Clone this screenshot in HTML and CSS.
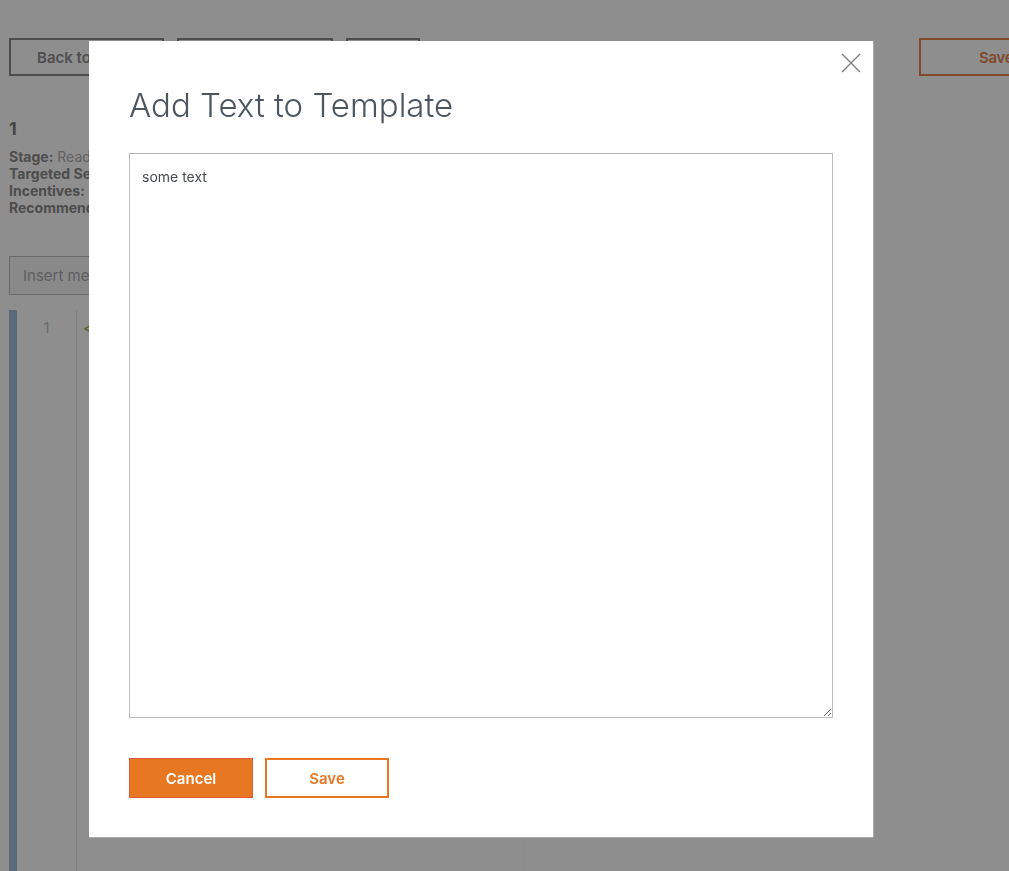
FILE: index.html
```html
<!DOCTYPE html>
<html lang="en">
<head>
<meta charset="utf-8">
<title>Add Text to Template</title>
<link rel="stylesheet" href="styles.css">
</head>
<body>
<div class="page">
  <div class="toolbar">
    <button class="btn-ghost btn-back">Back to Templates</button>
    <button class="btn-ghost btn-mid">Preview Email</button>
    <button class="btn-ghost btn-small">Test</button>
    <div class="spacer"></div>
    <button class="btn-ghost btn-save">Save</button>
  </div>
  <div class="info">
    <h2 class="info-title">1</h2>
    <div class="info-line"><b>Stage:</b> Ready to Send</div>
    <div class="info-line"><b>Targeted Segment:</b> All Customers</div>
    <div class="info-line"><b>Incentives:</b> None</div>
    <div class="info-line"><b>Recommended Send Time:</b> Morning</div>
  </div>
  <div class="insert-row">
    <input class="insert-input" type="text" placeholder="Insert merge field">
  </div>
  <div class="editor">
    <div class="editor-bar"></div>
    <div class="editor-gutter"><span class="line-no">1</span></div>
    <div class="editor-code"><span class="tag">&lt;</span></div>
  </div>
</div>

<div class="overlay">
  <div class="modal">
    <button class="modal-close" aria-label="Close">
      <svg width="20" height="20" viewBox="0 0 20 20"><path d="M1 1 L19 19 M19 1 L1 19" stroke="#7a7d82" stroke-width="1.3" fill="none"/></svg>
    </button>
    <h1 class="modal-title">Add Text to Template</h1>
    <textarea class="modal-text">some text</textarea>
    <div class="modal-actions">
      <button class="btn-cancel">Cancel</button>
      <button class="btn-save-modal">Save</button>
    </div>
  </div>
</div>
</body>
</html>
```
FILE: styles.css
```css
* { box-sizing: border-box; }
html, body { margin: 0; height: 100%; }
body {
  font-family: Inter, "Liberation Sans", sans-serif;
  background: #ffffff;
  overflow: hidden;
  width: 1009px;
  height: 871px;
}
.page {
  padding: 38px 0 0 9px;
  height: 871px;
  display: flex;
  flex-direction: column;
}
.toolbar {
  display: flex;
  gap: 13px;
  height: 38px;
}
.spacer { flex: 1; }
.btn-ghost {
  font-family: inherit;
  background: #fff;
  border: 2px solid #8a8a8a;
  color: #8e8e8e;
  font-size: 15px;
  font-weight: 600;
  height: 38px;
  padding: 0 26px;
  white-space: nowrap;
  text-align: left;
}
.btn-back { width: 155px; }
.btn-mid { width: 156px; }
.btn-small { width: 74px; }
.btn-save {
  width: 100px;
  margin-right: -10px;
  border-color: #e9844a;
  color: #e9844a;
  padding: 0 0 0 58px;
  letter-spacing: -0.3px;
}
.info { margin-top: 42px; color: #b0b0b0; font-size: 14px; }
.info-title {
  margin: 0 0 8px;
  font-size: 18px;
  font-weight: 700;
  color: #7e7e7e;
  line-height: 22px;
}
.info-line { line-height: 17px; white-space: nowrap; }
.info-line b { color: #8a8a8a; font-weight: 700; }
.insert-row { margin-top: 40px; }
.insert-input {
  width: 515px;
  height: 39px;
  border: 1px solid #bdbdbd;
  background: #f7f7f7;
  padding: 0 13px;
  font-family: inherit;
  font-size: 15px;
}
.insert-input::placeholder { color: #a8a8a8; }
.editor {
  margin-top: 15px;
  flex: 1;
  width: 516px;
  display: flex;
  border-right: 1px solid #fbfbfb;
}
.editor-bar { width: 8px; background: #a3bddc; }
.editor-gutter {
  width: 60px;
  border-right: 1px solid #e2e2e2;
  text-align: center;
  padding-top: 9px;
  font-size: 14px;
  color: #bdbdbd;
}
.editor-code {
  padding: 9px 0 0 6px;
  font-size: 14px;
  color: #7fb04a;
}
.overlay {
  position: fixed;
  inset: 0;
  background: rgba(0, 0, 0, 0.443);
}
.modal {
  position: absolute;
  left: 89px;
  top: 41px;
  width: 784px;
  height: 796px;
  background: #fff;
  padding: 42px 40px 0;
  box-shadow: 0 1px 0 rgba(255,255,255,0.25), 1px 0 0 rgba(255,255,255,0.25);
}
.modal-close {
  position: absolute;
  top: 12px;
  right: 12px;
  border: 0;
  background: transparent;
  padding: 0;
  width: 20px;
  height: 20px;
  cursor: pointer;
}
.modal-title {
  margin: 0;
  font-size: 33px;
  font-weight: 300;
  line-height: 44px;
  color: #4c5661;
}
.modal-text {
  display: block;
  margin-top: 26px;
  width: 704px;
  height: 565px;
  border: 1px solid #bcbcbc;
  border-top-color: #b3b3b3;
  padding: 14px 12px;
  font-family: inherit;
  font-size: 14px;
  line-height: 18px;
  color: #454a52;
  resize: both;
}
.modal-actions {
  display: flex;
  gap: 12px;
  margin-top: 40px;
}
.btn-cancel, .btn-save-modal {
  width: 124px;
  height: 40px;
  font-family: inherit;
  font-size: 15px;
  font-weight: 600;
}
.btn-cancel {
  background: #e87722;
  border: 1px solid #dc5a3a;
  color: #fff;
}
.btn-save-modal {
  background: #fff;
  border: 2px solid #e87722;
  color: #e87722;
}
```
